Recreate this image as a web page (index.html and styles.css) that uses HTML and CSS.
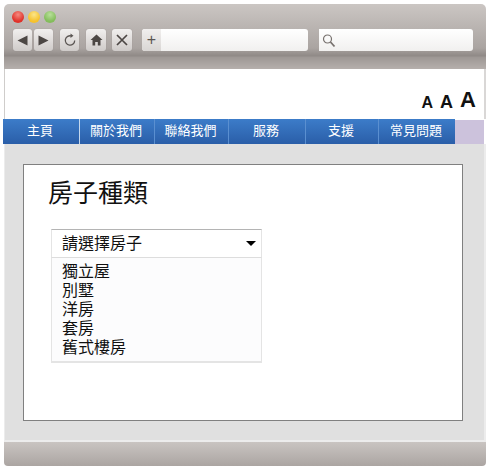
FILE: index.html
```html
<!DOCTYPE html>
<html lang="zh-Hant">

<head>
    <meta charset="UTF-8">
    <title>房子種類</title>
    <link rel="stylesheet" href="styles.css">
</head>

<body>
    <div class="window">
        <div class="toolbar">
            <div class="lights">
                <span class="light red"></span>
                <span class="light yellow"></span>
                <span class="light green"></span>
            </div>
            <div class="controls">
                <div class="btn-pair">
                    <span class="btn narrow"><svg width="11" height="11" viewBox="0 0 11 11"><path d="M0.500 5.500L10.500 0.500V10.500Z" fill="#4c4744"/></svg></span>
                    <span class="btn narrow"><svg width="11" height="11" viewBox="0 0 11 11"><path d="M10.500 5.500L0.500 0.500V10.500Z" fill="#4c4744"/></svg></span>
                </div>
                <span class="btn narrow reload"><svg width="12" height="14" viewBox="0 0 12 14"><path d="M7.500 3A4.700 4.700 0 1 0 10.700 7.500" fill="none" stroke="#5a5552" stroke-width="1.300"/><path d="M6.500 0.500L9.500 2.800L6.500 5Z" fill="#5a5552"/></svg></span>
                <span class="btn home"><svg width="13" height="12" viewBox="0 0 13 12"><path d="M6.500 0.500L0.500 6H2.500V11.500H5.200V8H7.800V11.500H10.500V6H12.500Z" fill="#4c4744"/></svg></span>
                <span class="btn"><svg width="12" height="12" viewBox="0 0 12 12"><path d="M1 1L11 11M11 1L1 11" stroke="#4c4744" stroke-width="1.700"/></svg></span>
                <div class="address">
                    <span class="plus">+</span>
                </div>
                <div class="search">
                    <svg width="14" height="15" viewBox="0 0 14 15"><circle cx="5.500" cy="6" r="4" fill="none" stroke="#77716e" stroke-width="1.200"/><path d="M8.500 9L12.500 13.500" stroke="#77716e" stroke-width="1.800"/></svg>
                </div>
            </div>
        </div>

        <div class="page-head">
            <span class="size-a small">A</span>
            <span class="size-a medium">A</span>
            <span class="size-a large">A</span>
        </div>

        <div class="nav">
            <a class="nav-item first">主頁</a>
            <a class="nav-item second">關於我們</a>
            <a class="nav-item third">聯絡我們</a>
            <a class="nav-item fourth">服務</a>
            <a class="nav-item fifth">支援</a>
            <a class="nav-item sixth">常見問題</a>
            <div class="nav-rest"></div>
        </div>

        <div class="content">
            <div class="card">
                <h1 class="title">房子種類</h1>
                <div class="dropdown">
                    <div class="dropdown-head">
                        <span>請選擇房子</span>
                        <span class="arrow"></span>
                    </div>
                    <ul class="dropdown-list">
                        <li>獨立屋</li>
                        <li>別墅</li>
                        <li>洋房</li>
                        <li>套房</li>
                        <li>舊式樓房</li>
                    </ul>
                </div>
            </div>
        </div>

        <div class="footer"></div>
    </div>
</body>

</html>
```

FILE: styles.css
```css
* {
    box-sizing: border-box;
}

body {
    margin: 0;
    background-color: #ffffff;
    font-family: "Liberation Sans", "Noto Sans CJK TC", sans-serif;
}

.window {
    width: 483px;
    height: 462px;
    margin: 4px 0 0 3px;
    display: flex;
    flex-direction: column;
}

.toolbar {
    height: 65px;
    margin-left: 1px;
    padding: 7px 0 0 8px;
    border-radius: 5px 5px 0 0;
    background: linear-gradient(to bottom, #cbc6c3 0, #aaa4a1 44px, #8f8986 52px, #9d9794 53px, #b5afac 65px);
}

.lights {
    display: flex;
    gap: 4px;
}

.light {
    width: 12px;
    height: 12px;
    border-radius: 50%;
}

.red {
    background: radial-gradient(circle at 50% 30%, #f58a80, #e0322a 65%);
}

.yellow {
    background: radial-gradient(circle at 50% 30%, #fbe58a, #f6c22c 65%);
}

.green {
    background: radial-gradient(circle at 50% 30%, #b8e09a, #84bd5c 65%);
}

.controls {
    display: flex;
    align-items: center;
    margin: 6px 0 0 1px;
    height: 22px;
}

.btn-pair {
    display: flex;
    gap: 2px;
    margin-right: 7px;
}

.btn {
    width: 20px;
    height: 22px;
    display: flex;
    align-items: center;
    justify-content: center;
    border-radius: 3px;
    background: linear-gradient(to bottom, #f1efee, #cfcbc9);
    box-shadow: 0 0 1px #8f8986;
}

.narrow {
    width: 19px;
}

.reload {
    margin-right: 7px;
}

.home {
    margin-right: 6px;
}

.address {
    width: 166px;
    height: 22px;
    margin-left: 10px;
    border-radius: 3px;
    background: linear-gradient(to bottom, #ffffff, #f1f0ef);
}

.plus {
    display: block;
    width: 19px;
    height: 22px;
    border-radius: 3px 0 0 3px;
    background: linear-gradient(to bottom, #f1efee, #d9d6d4);
    color: #5a5552;
    font-size: 16px;
    line-height: 21px;
    text-align: center;
}

.search {
    width: 154px;
    height: 22px;
    margin-left: 11px;
    padding: 4px 0 0 3px;
    border-radius: 0 3px 3px 0;
    background: linear-gradient(to bottom, #ffffff, #f1f0ef);
}

.page-head {
    height: 50px;
    margin-left: 1px;
    padding-right: 8px;
    display: flex;
    justify-content: flex-end;
    align-items: flex-end;
    gap: 7px;
    background-color: #ffffff;
    border-left: 1px solid #cfcdcb;
    border-right: 2px solid #d9d7d6;
    font-weight: bold;
    color: #111111;
}

.size-a {
    line-height: 1;
    margin-bottom: 8px;
}

.small {
    font-size: 16px;
}

.medium {
    font-size: 18px;
}

.large {
    font-size: 22px;
}

.nav {
    height: 25px;
    display: flex;
}

.nav-item {
    display: block;
    height: 25px;
    padding-right: 2px;
    background: linear-gradient(to bottom, #3c7cc9, #2a5ea8);
    border-right: 1px solid #5a8fd0;
    color: #ffffff;
    font-size: 13px;
    line-height: 24px;
    text-align: center;
}

.first {
    width: 77px;
    border-right: 1px solid #c4d8ee;
}

.second {
    width: 75px;
}

.third {
    width: 74px;
}

.fourth {
    width: 77px;
}

.fifth {
    width: 73px;
}

.sixth {
    width: 76px;
    border-right: none;
}

.nav-rest {
    width: 29px;
    margin-top: 1px;
    background-color: #ccc2dc;
}

.content {
    height: 296px;
    margin-left: 1px;
    padding: 20px 21px 19px 18px;
    background-color: #e0e0e0;
    border-left: 1px solid #ececec;
    border-right: 2px solid #ececec;
}

.card {
    height: 257px;
    padding: 13px 0 0 24px;
    background-color: #ffffff;
    border: 1px solid #808080;
}

.title {
    margin: 0;
    font-size: 25px;
    font-weight: normal;
    line-height: 30px;
    color: #111111;
}

.dropdown {
    width: 211px;
    margin: 21px 0 0 3px;
    color: #111111;
    font-size: 16px;
}

.dropdown-head {
    height: 29px;
    padding: 0 4px 3px 10px;
    display: flex;
    align-items: center;
    justify-content: space-between;
    border: 1px solid #e4e4e4;
    border-top: 1px solid #b4b4b4;
    border-bottom: 1px solid #dddddd;
    background-color: #ffffff;
}

.arrow {
    width: 0;
    height: 0;
    margin: 3px 1px 0 0;
    border-left: 5px solid transparent;
    border-right: 5px solid transparent;
    border-top: 5px solid #000000;
}

.dropdown-list {
    height: 105px;
    margin: 0;
    padding: 4px 0 0 10px;
    list-style: none;
    border: 1px solid #e4e4e4;
    border-top: none;
    border-bottom: 2px solid #e4e4e4;
    background-color: #fcfcfd;
    line-height: 19px;
}

.footer {
    height: 26px;
    margin-left: 1px;
    border-top: 2px solid #ececec;
    border-radius: 0 0 4px 4px;
    background: linear-gradient(to bottom, #c9c4c1, #aba5a2);
}
```
